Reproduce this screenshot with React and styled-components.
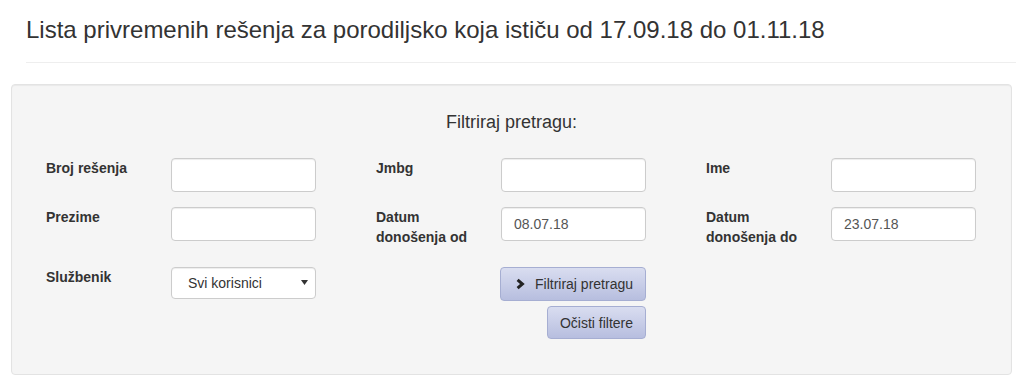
import React from "react";
import styled, { createGlobalStyle } from "styled-components";

const GlobalStyle = createGlobalStyle`
  body {
    margin: 0;
    background: #fff;
    color: #333;
    font-family: "Liberation Sans", Arial, Helvetica, sans-serif;
    font-size: 14px;
    line-height: 20px;
  }
  * { box-sizing: border-box; }
`;

const PageHeader = styled.h1`
  margin: 0 0 0 26px;
  padding: 17px 0 19px;
  border-bottom: 1px solid #eee;
  font-size: 24px;
  line-height: 26px;
  font-weight: normal;
  color: #333;
`;

const Well = styled.div`
  margin: 21px 4px 0 11px;
  padding: 19px 34px 20px;
  background: #f5f5f5;
  border: 1px solid #e3e3e3;
  border-radius: 4px;
  box-shadow: inset 0 1px 1px rgba(0, 0, 0, 0.05);
`;

const FilterTitle = styled.h4`
  margin: 8px 0 26px;
  text-align: center;
  font-size: 18px;
  line-height: 20px;
  font-weight: normal;
  color: #333;
`;

const FieldsGrid = styled.div`
  display: grid;
  grid-template-columns: repeat(3, 270px);
  column-gap: 60px;
  align-items: start;
`;

const FormGroup = styled.div`
  display: grid;
  grid-template-columns: 125px 145px;
  align-items: start;
  margin-bottom: 15px;
`;

const Label = styled.label`
  display: block;
  margin-bottom: 5px;
  padding-right: 15px;
  font-weight: bold;
  font-size: 14px;
  line-height: 20px;
  color: #333;
`;

const TextInput = styled.input`
  width: 145px;
  height: 34px;
  padding: 6px 12px;
  font: inherit;
  font-size: 14px;
  line-height: 20px;
  color: #555;
  background: #fff;
  border: 1px solid #ccc;
  border-radius: 4px;
  box-shadow: inset 0 1px 1px rgba(0, 0, 0, 0.075);
  outline: none;
`;

const SelectWrap = styled.div`
  position: relative;
  width: 145px;
`;

const Select = styled.select`
  appearance: none;
  width: 145px;
  height: 32px;
  padding: 5px 24px 5px 16px;
  font: inherit;
  font-size: 14px;
  line-height: 20px;
  color: #333;
  background: #fff;
  border: 1px solid #ccc;
  border-radius: 4px;
  box-shadow: inset 0 1px 1px rgba(0, 0, 0, 0.075);
  outline: none;
`;

const Caret = styled.svg`
  position: absolute;
  right: 8px;
  top: 13px;
  pointer-events: none;
`;

const ButtonStack = styled.div`
  display: flex;
  flex-direction: column;
  align-items: flex-end;
  gap: 5px;
  margin-bottom: 15px;
`;

const Button = styled.button`
  display: inline-flex;
  align-items: center;
  gap: 9px;
  height: ${(p) => (p.$small ? "33px" : "34px")};
  padding: 0 12px;
  font: inherit;
  font-size: 14px;
  line-height: 20px;
  color: #333;
  background: linear-gradient(to bottom, #d9ddf0 0%, #b7bedf 100%);
  border: 1px solid #a6aed2;
  border-radius: 4px;
  cursor: pointer;
`;

const Chevron = () => (
  <svg width="13" height="12" viewBox="0 0 13 12" aria-hidden="true">
    <polyline
      points="4.6,1.9 9.4,6 4.6,10.1"
      fill="none"
      stroke="#222"
      strokeWidth="3"
      strokeLinejoin="miter"
    />
  </svg>
);

const Field = ({ label, value = "" }) => (
  <FormGroup>
    <Label>{label}</Label>
    <TextInput type="text" defaultValue={value} />
  </FormGroup>
);

export default function App() {
  return (
    <>
      <GlobalStyle />
      <PageHeader>
        Lista privremenih rešenja za porodiljsko koja ističu od 17.09.18 do 01.11.18
      </PageHeader>
      <Well>
        <FilterTitle>Filtriraj pretragu:</FilterTitle>
        <FieldsGrid>
          <Field label="Broj rešenja" />
          <Field label="Jmbg" />
          <Field label="Ime" />
          <Field label="Prezime" />
          <Field label="Datum donošenja od" value="08.07.18" />
          <Field label="Datum donošenja do" value="23.07.18" />
          <FormGroup>
            <Label>Službenik</Label>
            <SelectWrap>
              <Select defaultValue="svi">
                <option value="svi">Svi korisnici</option>
              </Select>
              <Caret width="7" height="5" viewBox="0 0 7 5">
                <polygon points="0,0 7,0 3.5,5" fill="#333" />
              </Caret>
            </SelectWrap>
          </FormGroup>
          <ButtonStack>
            <Button type="button">
              <Chevron />
              Filtriraj pretragu
            </Button>
            <Button type="button" $small>
              Očisti filtere
            </Button>
          </ButtonStack>
        </FieldsGrid>
      </Well>
    </>
  );
}
